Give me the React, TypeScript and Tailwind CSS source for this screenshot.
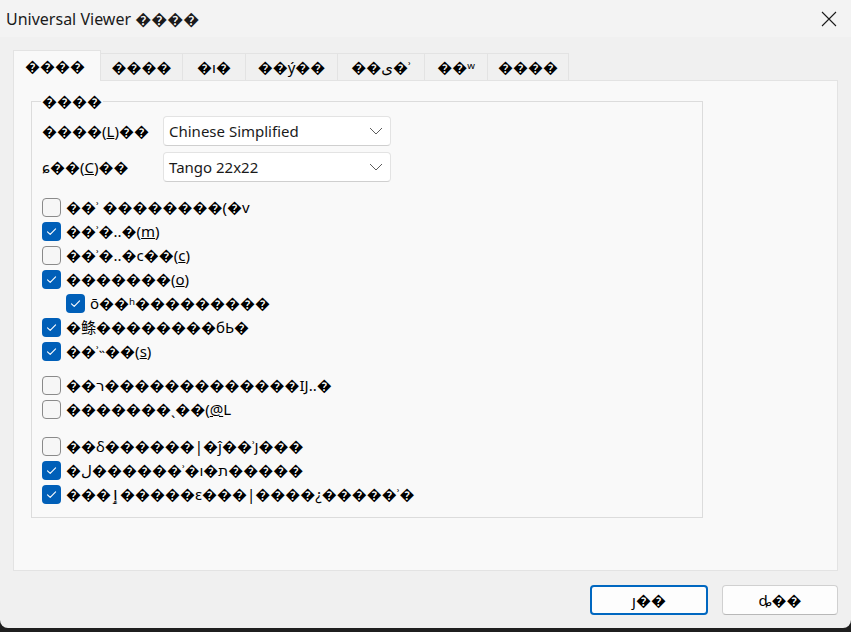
import type { ReactNode } from 'react';

const FONT = { fontFamily: '"Noto Sans", "DejaVu Sans", "Noto Sans CJK SC", sans-serif' };

const tabs = [
  { t: '����', w: 'w-[88px]' },
  { t: '����', w: 'w-[82px]' },
  { t: '�ı�', w: 'w-[63px]' },
  { t: '��ý��', w: 'w-[92px]' },
  { t: '��ی�ʾ', w: 'w-[87px]' },
  { t: '��ʷ', w: 'w-[63px]' },
  { t: '����', w: 'w-[81px]' },
];

interface Opt {
  label: ReactNode;
  checked: boolean;
  indent?: boolean;
}

const group1: Opt[] = [
  { label: '��ʾ ��������(�v', checked: false },
  { label: <>��ʾ�‥�(<span className="underline">m</span>)</>, checked: true },
  { label: <>��ʾ�‥�c��(<span className="underline">c</span>)</>, checked: false },
  { label: <>�������(<span className="underline">o</span>)</>, checked: true },
  { label: 'ō��ʰ���������', checked: true, indent: true },
  { label: '�鲦��������бЬ�', checked: true },
  { label: <>��ʾ˵��(<span className="underline">s</span>)</>, checked: true },
];

const group2: Opt[] = [
  { label: '��ר�������������IJ‥�', checked: false },
  { label: <>�������ˎ��(<span className="underline">@</span>L</>, checked: false },
];

const group3: Opt[] = [
  { label: '��δ������|�ĵ��ʾյ���', checked: false },
  { label: '�ل������ʾ�ı�ת�����', checked: true },
  { label: '���ٳ�����ε���|����¿�����ʾ�', checked: true },
];

function Box({ checked }: { checked: boolean }) {
  if (!checked) {
    return <span className="w-[19px] h-[19px] shrink-0 rounded-[4px] border border-[#8a8a8a] bg-[#f6f6f6]" />;
  }
  return (
    <span className="w-[19px] h-[19px] shrink-0 rounded-[4px] bg-[#005fb8] flex items-center justify-center">
      <svg width="19" height="19" viewBox="0 0 19 19" fill="none">
        <path d="M5.5 9.8 L8.2 12.4 L13.6 6.8" stroke="#ffffff" strokeWidth="1.1" strokeLinecap="round" strokeLinejoin="round" />
      </svg>
    </span>
  );
}

function Row({ opt }: { opt: Opt }) {
  return (
    <div className={`flex items-center h-[24px] gap-[5px] ${opt.indent ? 'pl-[24px]' : ''}`}>
      <Box checked={opt.checked} />
      <span className="whitespace-nowrap">{opt.label}</span>
    </div>
  );
}

function Combo({ value }: { value: string }) {
  return (
    <div className="w-[228px] h-[30px] bg-white border border-[#e3e3e3] border-b-[#cfcfcf] rounded-[4px] flex items-center justify-between pl-[5px] pr-[7px]">
      <span className="text-[#1a1a1a]">{value}</span>
      <svg width="14" height="8" viewBox="0 0 14 8" fill="none">
        <path d="M1 1 L7 7 L13 1" stroke="#5c5c5c" strokeWidth="1" />
      </svg>
    </div>
  );
}

export default function App() {
  return (
    <div className="w-[851px] h-[632px] bg-[#1f1f1f] text-[15px] text-black" style={FONT}>
      <div className="h-[628px] bg-[#f0f0f0] rounded-b-[8px] flex flex-col">
        <div className="h-[37px] flex items-center justify-between pl-[6px] pr-[14px] bg-[#f3f3f3]">
          <span className="text-[16px] text-[#1a1a1a]">Universal Viewer ����</span>
          <svg width="16" height="16" viewBox="0 0 16 16" fill="none">
            <path d="M1 1 L15 15 M15 1 L1 15" stroke="#1a1a1a" strokeWidth="1.1" />
          </svg>
        </div>

        <div className="flex flex-col px-[13px] pt-[13px]">
          <div className="flex items-end h-[30px]">
            {tabs.map((t, i) => (
              <div
                key={i}
                className={
                  i === 0
                    ? `h-[31px] -mb-px px-[11px] ${t.w} bg-[#f9f9f9] border border-b-0 border-[#e3e3e3] flex items-center relative z-10`
                    : `h-[27px] ${t.w} bg-[#f0f0f0] border border-l-0 border-b-0 border-[#e3e3e3] flex items-center justify-center`
                }
              >
                <span className="whitespace-nowrap">{t.t}</span>
              </div>
            ))}
          </div>

          <div className="h-[491px] bg-[#f9f9f9] border border-[#e3e3e3] pl-[17px] pt-[10px]">
            <fieldset className="w-[672px] h-[427px] border border-[#dcdcdc] px-[10px] pt-0">
              <legend className="px-px -ml-px leading-[20px]">����</legend>
              <div className="flex flex-col gap-[6px] mt-[5px]">
                <div className="flex items-center">
                  <span className="w-[121px] whitespace-nowrap">
                    ����(<span className="underline">L</span>)��
                  </span>
                  <Combo value="Chinese Simplified" />
                </div>
                <div className="flex items-center">
                  <span className="w-[121px] whitespace-nowrap">
                    ɕ��(<span className="underline">C</span>)��
                  </span>
                  <Combo value="Tango 22x22" />
                </div>
              </div>

              <div className="flex flex-col mt-[13px]">
                {group1.map((o, i) => (
                  <Row key={i} opt={o} />
                ))}
              </div>
              <div className="flex flex-col mt-[10px]">
                {group2.map((o, i) => (
                  <Row key={i} opt={o} />
                ))}
              </div>
              <div className="flex flex-col mt-[13px]">
                {group3.map((o, i) => (
                  <Row key={i} opt={o} />
                ))}
              </div>
            </fieldset>
          </div>

          <div className="flex justify-end gap-[14px] mt-[14px]">
            <button className="w-[118px] h-[30px] rounded-[4px] border-2 border-[#0067c0] bg-[#fdfdfd] flex items-center justify-center">
              ȷ��
            </button>
            <button className="w-[116px] h-[30px] rounded-[4px] border border-[#d0d0d0] border-b-[#b8b8b8] bg-[#fdfdfd] flex items-center justify-center">
              ȡ��
            </button>
          </div>
        </div>
      </div>
    </div>
  );
}
